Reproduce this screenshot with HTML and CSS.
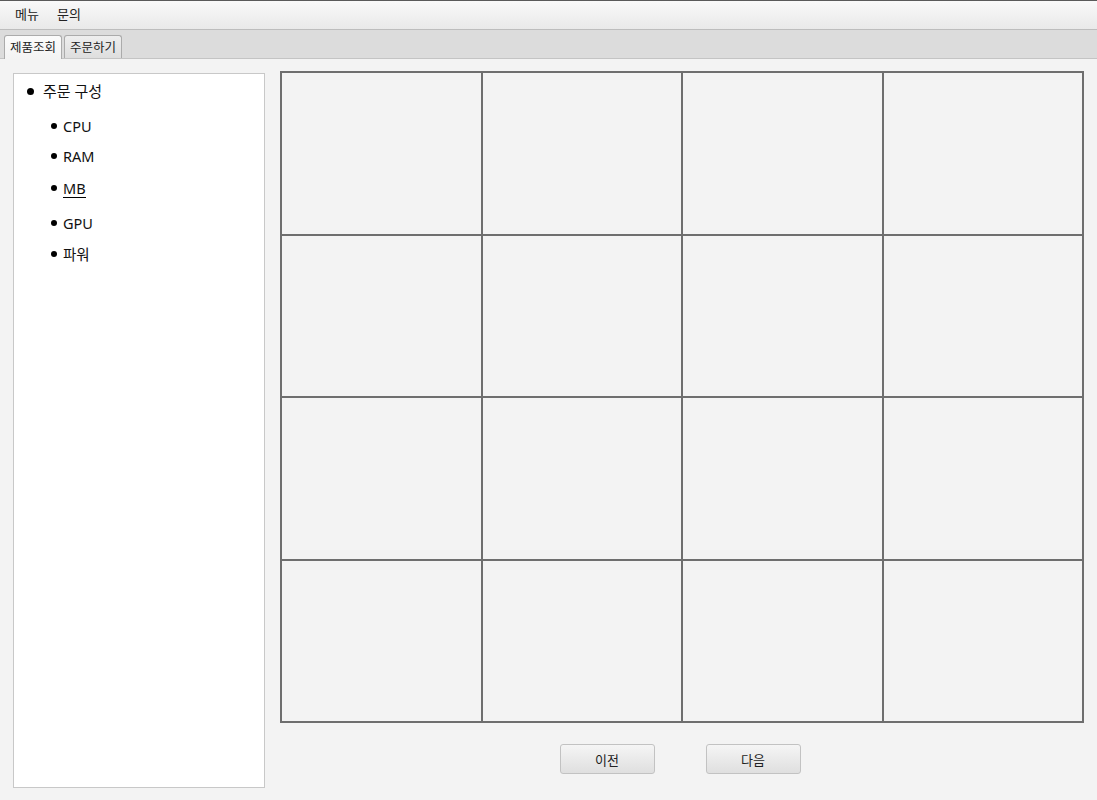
FILE: index.html
```html
<!DOCTYPE html>
<html lang="ko">
<head>
<meta charset="utf-8">
<link rel="stylesheet" href="styles.css">
</head>
<body>
<div class="app">
  <div class="menubar">
    <span class="menu-item">메뉴</span>
    <span class="menu-item">문의</span>
  </div>
  <div class="tabbar">
    <div class="tab active">제품조회</div>
    <div class="tab">주문하기</div>
  </div>
  <div class="content">
    <div class="tree">
      <div class="node root"><span class="dot"></span><span class="label">주문 구성</span></div>
      <div class="children">
        <div class="node c1"><span class="dot small"></span><span class="label">CPU</span></div>
        <div class="node c2"><span class="dot small"></span><span class="label">RAM</span></div>
        <div class="node c3"><span class="dot small"></span><span class="label under">MB</span></div>
        <div class="node c4"><span class="dot small"></span><span class="label">GPU</span></div>
        <div class="node c5"><span class="dot small"></span><span class="label">파워</span></div>
      </div>
    </div>
    <div class="main">
      <div class="grid">
        <div class="cell"></div><div class="cell"></div><div class="cell"></div><div class="cell"></div>
        <div class="cell"></div><div class="cell"></div><div class="cell"></div><div class="cell"></div>
        <div class="cell"></div><div class="cell"></div><div class="cell"></div><div class="cell"></div>
        <div class="cell"></div><div class="cell"></div><div class="cell"></div><div class="cell"></div>
      </div>
      <div class="buttons">
        <button class="btn">이전</button>
        <button class="btn">다음</button>
      </div>
    </div>
  </div>
</div>
</body>
</html>
```
FILE: styles.css
```css
* { box-sizing: border-box; }
html, body { margin: 0; padding: 0; }
body {
  width: 1097px;
  height: 800px;
  overflow: hidden;
  background: #f3f3f3;
  font-family: "Noto Sans", "Noto Sans CJK KR", sans-serif;
  color: #111;
}
.app { display: flex; flex-direction: column; height: 800px; }
.menubar {
  height: 30px;
  border-top: 1px solid #5a5a5a;
  border-bottom: 1px solid #bdbdbd;
  background: linear-gradient(#f9f9f9, #e9e9e9);
  display: flex;
  align-items: center;
  padding-left: 15px;
  gap: 18px;
  font-family: "Noto Sans CJK KR", sans-serif;
  font-size: 13px;
  color: #222;
}
.menu-item { line-height: 26px; padding-bottom: 2px; }
.tabbar {
  height: 29px;
  background: #dcdcdc;
  border-bottom: 1px solid #c4c4c4;
  display: flex;
  align-items: flex-end;
  padding-left: 4px;
  gap: 2px;
}
.tab {
  height: 23px;
  width: 58px;
  text-align: center;
  border: 1px solid #ababab;
  border-bottom: none;
  border-radius: 3px 3px 0 0;
  background: linear-gradient(#eeeeee, #dedede);
  font-family: "Noto Sans CJK KR", sans-serif;
  font-size: 12.5px;
  line-height: 21px;
  color: #222;
}
.tab.active {
  height: 24px;
  margin-bottom: -1px;
  background: linear-gradient(#fbfbfb, #f3f3f3);
}
.content {
  flex: 1;
  display: flex;
  padding: 14px 12px 12px 13px;
  gap: 15px;
}
.tree {
  flex-shrink: 0;
  width: 252px;
  height: 715px;
  background: #fff;
  border: 1px solid #c8c8c8;
  padding-top: 5px;
}
.node { display: flex; align-items: center; }
.root { padding-left: 13px; height: 24px; font-size: 15px; }
.dot {
  width: 7px; height: 7px; border-radius: 50%;
  background: #000;
  margin-right: 9px;
}
.dot.small { width: 6px; height: 6px; margin-right: 6px; }
.children { padding-left: 37px; font-size: 14.5px; }
.children .node { height: 20px; }
.c1 { margin-top: 13px; }
.c2 { margin-top: 10px; }
.c3 { margin-top: 12px; }
.c4 { margin-top: 15px; }
.c5 { margin-top: 11px; }
.label { line-height: 20px; }
.under { border-bottom: 1px solid #000; line-height: 18px; }
.main { flex-shrink: 0; display: flex; flex-direction: column; margin-top: -2px; }
.grid {
  width: 804px;
  height: 652px;
  display: grid;
  grid-template-columns: repeat(4, 1fr);
  grid-template-rows: repeat(4, 1fr);
  gap: 2px;
  padding: 2px;
  background: #6e6e6e;
}
.cell { background: #f3f3f3; }
.buttons {
  display: flex;
  justify-content: center;
  gap: 51px;
  margin-top: 21px;
  padding-right: 4px;
}
.btn {
  width: 95px;
  height: 30px;
  border: 1px solid #c2c2c2;
  border-radius: 3px;
  background: linear-gradient(#f5f5f5, #dfdfdf);
  font-family: "Noto Sans CJK KR", sans-serif;
  font-size: 13px;
  color: #222;
  padding: 0;
}
```
